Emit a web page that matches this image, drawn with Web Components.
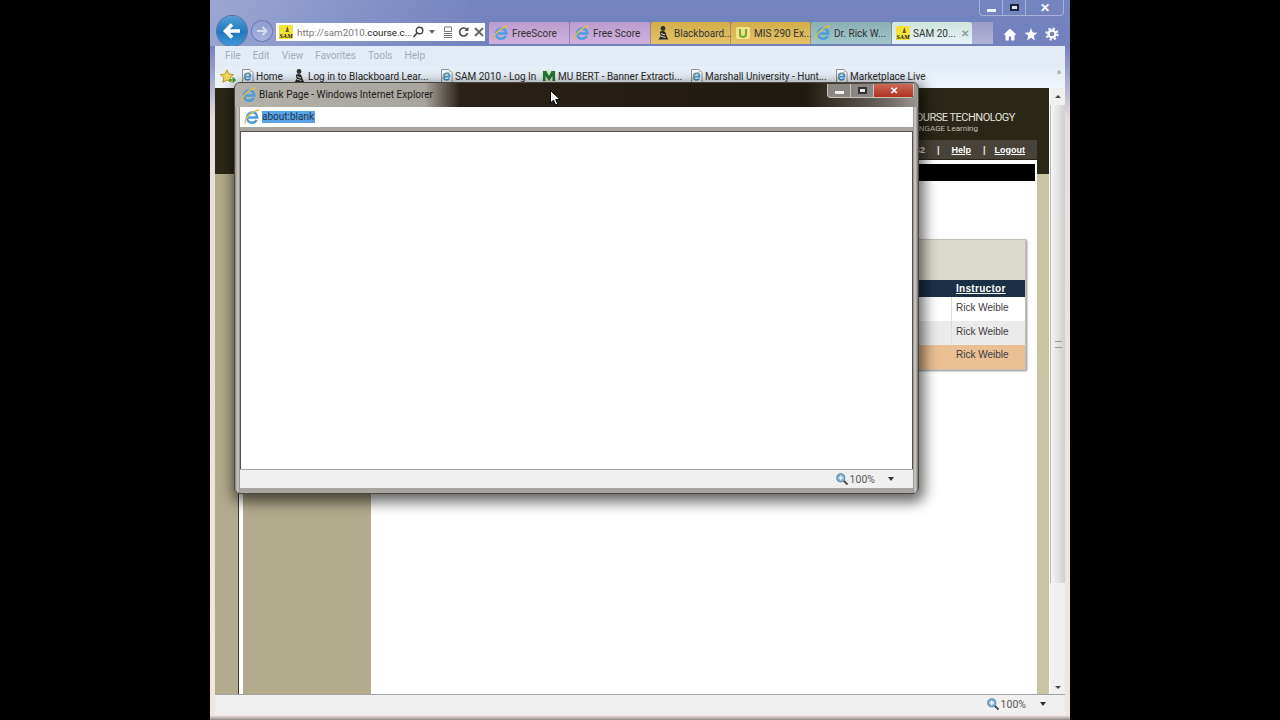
<!DOCTYPE html>
<html lang="en">

<head>
    <meta charset="UTF-8" />
    <title>SAM 2010 - Windows Internet Explorer</title>
    <style>
        html, body { margin: 0; height: 720px; overflow: hidden; background: #000; }
        body { display: flex; justify-content: center; font-family: Roboto, "Noto Sans", sans-serif; }
    </style>
</head>

<body>
    <ie-window>
        <ie-toolbar slot="toolbar">
            <ie-tab slot="tabs" tone="purple" icon="ie">FreeScore</ie-tab>
            <ie-tab slot="tabs" tone="purple" icon="ie">Free Score</ie-tab>
            <ie-tab slot="tabs" tone="gold" icon="bb">Blackboard...</ie-tab>
            <ie-tab slot="tabs" tone="gold" icon="u">MIS 290 Ex...</ie-tab>
            <ie-tab slot="tabs" tone="teal" icon="ie">Dr. Rick W...</ie-tab>
            <ie-tab slot="tabs" tone="active" icon="sam" closable>SAM 20...</ie-tab>
        </ie-toolbar>
        <ie-favorites slot="favs">
            <ie-fav icon="page" style="width:50px">Home</ie-fav>
            <ie-fav icon="bb" style="width:149px">Log in to Blackboard Lear...</ie-fav>
            <ie-fav icon="page" style="width:101px">SAM 2010 - Log In</ie-fav>
            <ie-fav icon="mu" style="width:149px">MU BERT - Banner Extracti...</ie-fav>
            <ie-fav icon="page" style="width:145px">Marshall University - Hunt...</ie-fav>
            <ie-fav icon="page" style="width:110px">Marketplace Live</ie-fav>
        </ie-favorites>
        <sam-page slot="page">
            <course-row slot="rows">Rick Weible</course-row>
            <course-row slot="rows" tone="grey">Rick Weible</course-row>
            <course-row slot="rows" tone="orange">Rick Weible</course-row>
        </sam-page>
        <ie-popup slot="popup"></ie-popup>
        <mouse-cursor slot="popup"></mouse-cursor>
    </ie-window>

    <script>
        // svg for every little icon, shared by the elements below
        const ICONS = {
            ie: `<svg viewBox="0 0 16 16" width="16" height="16"><path d="M3.6 8.6h9.6c0-3.200-2-5.200-4.800-5.200S3 5.600 3 8.700s2.200 5 5.100 5c2 0 3.700-1 4.500-2.700" fill="none" stroke="#4a9fdc" stroke-width="2.500"/><path d="M1.400 14.600C-.2 10.800 6 2.600 15 1" fill="none" stroke="#e4bc4a" stroke-width="1.300"/></svg>`,
            page: `<svg viewBox="2 0 13 16" width="14" height="16"><path d="M3 1.500h7.500l3 3v10H3z" fill="#f7f9fc" stroke="#8a94a0"/><path d="M5.400 8.600h5.700c0-2-1.200-3.200-2.900-3.200S5.100 6.700 5.100 8.700s1.300 3.200 3.100 3.200c1.200 0 2.200-.6 2.700-1.600" fill="none" stroke="#3d97d6" stroke-width="1.600"/><path d="M3.600 12.800C3 10 7 5 11.800 3.600" fill="none" stroke="#dcae3a" stroke-width=".9"/></svg>`,
            bb: `<svg viewBox="0 0 16 16" width="16" height="16"><circle cx="8" cy="3.500" r="2.400" fill="#33332f"/><path d="M4.800 6.800c2-1.300 4.200-1 5.400.2L12 12l1.500 2.500H3.500L5.600 11z" fill="#2a2a28"/><path d="M6 8.500l4 1.500M5.500 11l5 1.600" stroke="#d8d8d0" stroke-width="1"/></svg>`,
            sam: `<svg viewBox="0 0 14 14" width="14" height="14"><rect width="14" height="14" fill="#f5e23a"/><path d="M8.500 1L6.500 7h3.500z" fill="#6a5a1a"/><text x="7" y="12.500" text-anchor="middle" font-family="Liberation Serif, serif" font-size="6.500" font-weight="700" font-style="italic" fill="#222">SAM</text></svg>`,
            u: `<svg viewBox="0 0 16 16" width="16" height="16"><rect x="1" y="2" width="14" height="12" rx="2" fill="#f2e58a"/><path d="M5 4v5c0 2 1.300 3 3 3s3-1 3-3V4" fill="none" stroke="#7fa83c" stroke-width="2.200"/></svg>`,
            mu: `<svg viewBox="0 0 16 16" width="16" height="16"><rect x="1" y="2" width="14" height="12" fill="#dfe8d8"/><path d="M2 3h3.500L8 8l2.500-5H14v10h-2.500V8L8 13 4.500 8v5H2z" fill="#1f7a32"/></svg>`,
            zoom: `<svg viewBox="0 0 13 13" width="12" height="12"><circle cx="5.200" cy="5.200" r="4.400" fill="#7fb0d6" stroke="#5a7f9c"/><path d="M2.800 5.200h5M5.200 2.800v5" stroke="#fff" stroke-width="1.300"/><path d="M8.500 8.500l4 4" stroke="#3a4048" stroke-width="2"/></svg>`
        };

        class IeIcon extends HTMLElement {
            connectedCallback() {
                const root = this.attachShadow({ mode: 'open' });
                root.innerHTML = `<style>:host{display:inline-flex;flex:none;align-items:center}</style>${ICONS[this.getAttribute('name')] || ''}`;
            }
        }
        customElements.define('ie-icon', IeIcon);

        // outer browser frame
        class IeWindow extends HTMLElement {
            constructor() {
                super();
                this.attachShadow({ mode: 'open' }).innerHTML = `
                <style>
                    :host { display: flex; flex-direction: column; position: relative; width: 860px; height: 720px; flex: none;
                        background: linear-gradient(#7385bf 0, #7381bd 46px, #e9dcdc 120px, #f3e6e2 100%); overflow: hidden; }
                    .glow { position: absolute; left: 0; top: 0; width: 260px; height: 46px; background: linear-gradient(100deg, rgba(200,210,235,.45), rgba(200,210,235,0)); }
                    .client { position: relative; display: flex; flex-direction: column; margin: 0 5px; height: 670px; }
                    .menu { display: flex; gap: 12px; height: 20px; align-items: center; padding: 0 0 2px 10px; box-sizing: border-box; background: #e2ebf6;
                        color: #a3abb5; font-size: 10px; }
                    .page { height: 606px; display: flex; }
                    .status { height: 21px; display: flex; align-items: center; justify-content: flex-end; gap: 2px; padding: 0 19px 2px 0; box-sizing: border-box;
                        background: #f0f0f0; border-top: 1px solid #a3a3a3; font-size: 10.500px; color: #5a5a5a; }
                    .status i { width: 0; height: 0; margin-left: 12px; border: 3.500px solid transparent; border-top: 4px solid #333; border-bottom: 0; }
                    .edge { height: 4px; background: linear-gradient(#e8dcd8, #8d8886); }
                    ::slotted(ie-popup) { position: absolute; left: 24px; top: 82px; }
                    ::slotted(mouse-cursor) { position: absolute; left: 340px; top: 90px; }
                </style>
                <div class="glow"></div>
                <slot name="toolbar"></slot>
                <div class="client">
                    <div class="menu"><span>File</span><span>Edit</span><span>View</span><span>Favorites</span><span>Tools</span><span>Help</span></div>
                    <slot name="favs"></slot>
                    <div class="page"><slot name="page"></slot></div>
                    <div class="status"><ie-icon name="zoom"></ie-icon><span>100%</span><i></i></div>
                </div>
                <div class="edge"></div>
                <slot name="popup"></slot>`;
            }
        }
        customElements.define('ie-window', IeWindow);

        // caption buttons + back/forward, address box, tabs, tools
        class IeToolbar extends HTMLElement {
            constructor() {
                super();
                this.attachShadow({ mode: 'open' }).innerHTML = `
                <style>
                    :host { display: flex; flex-direction: column; position: relative; height: 46px; }
                    .caption { display: flex; justify-content: flex-end; height: 16px; padding-right: 6px; }
                    .btns { display: flex; width: 85px; border: 1px solid #a8b2d8; border-top: 0; border-radius: 0 0 4px 4px; box-sizing: border-box; }
                    .btns span { display: flex; align-items: center; justify-content: center; width: 22px; border-right: 1px solid #a8b2d8; }
                    .btns span:last-child { flex: 1; border: 0; color: #fff; font: bold 12px "Liberation Sans", sans-serif; }
                    .min { width: 9px; height: 3px; background: #f2f4fa; margin-top: 5px; }
                    .max { width: 9px; height: 7px; border: 2px solid #1e2340; background: #dfe4f2; box-sizing: border-box; }
                    .nav { display: flex; flex: 1; align-items: flex-end; padding-left: 7px; }
                    .back { width: 30px; height: 30px; border-radius: 50%; flex: none; display: flex; align-items: center; justify-content: center;
                        background: linear-gradient(#4f9ed8, #1f78bd 55%, #3f9ad8); box-shadow: 0 0 0 1px #5a6aa8; }
                    .fwd { width: 20px; height: 20px; border-radius: 50%; margin: 0 4px 5px 5px; flex: none; display: flex; align-items: center; justify-content: center;
                        background: linear-gradient(#8f9bd0, #a8b2dc); box-shadow: 0 0 0 1px #6d79b4; }
                    .addr { width: 209px; height: 18px; margin: 0 4px 5px 0; flex: none; display: flex; align-items: center; background: #fff; box-sizing: border-box; padding-left: 3px;
                        font-size: 9.800px; color: #222; white-space: nowrap; }
                    .addr b { font-weight: 400; color: #7a7a7a; margin-left: 4px; }
                    .addr .tools { display: flex; align-items: center; margin-left: auto; padding-right: 5px; gap: 5px; }
                    .tabs { display: flex; height: 22px; flex: none; margin-bottom: 2px; }
                    .newtab { width: 21px; background: linear-gradient(#9d9dc8, #b0b4d6); }
                    .right { display: flex; gap: 7px; margin: 0 0 5px 10px; align-items: center; }
                </style>
                <div class="caption"><div class="btns"><span><i class="min"></i></span><span><i class="max"></i></span><span>✕</span></div></div>
                <div class="nav">
                    <div class="back"><svg width="20" height="18" viewBox="0 0 20 18"><path d="M18 9H4M10 2.500L3.500 9l6.500 6.500" fill="none" stroke="#fff" stroke-width="3.600"/></svg></div>
                    <div class="fwd"><svg width="12" height="12" viewBox="0 0 12 12"><path d="M1 6h9M6.500 2L10.500 6l-4 4" fill="none" stroke="#d7dcf0" stroke-width="1.800"/></svg></div>
                    <div class="addr">
                        <ie-icon name="sam"></ie-icon><span><b>http://sam2010</b>.course.c...</span>
                        <div class="tools">
                            <svg width="12" height="12" viewBox="0 0 12 12"><circle cx="7.500" cy="4.500" r="3.300" fill="none" stroke="#444" stroke-width="1.400"/><path d="M5 7l-3.500 4" stroke="#444" stroke-width="1.800"/></svg>
                            <svg width="6" height="4" viewBox="0 0 6 4"><path d="M0 0h6L3 4z" fill="#666"/></svg>
                            <svg width="10" height="12" viewBox="0 0 10 12" style="margin-left:3px"><path d="M1.500 1h7v4.500h-7zM1 7.500h8M1 9.500h8M1 11.500h8" fill="none" stroke="#777"/></svg>
                            <svg width="11" height="12" viewBox="0 0 11 12"><path d="M9.500 7a4 4 0 1 1-1-3.800" fill="none" stroke="#555" stroke-width="1.700"/><path d="M10.500 .8v4.200H6.300z" fill="#555"/></svg>
                            <svg width="10" height="10" viewBox="0 0 10 10"><path d="M1 1l8 8M9 1L1 9" stroke="#666" stroke-width="1.800"/></svg>
                        </div>
                    </div>
                    <div class="tabs"><slot name="tabs"></slot><div class="newtab"></div></div>
                    <div class="right">
                        <svg width="14" height="13" viewBox="0 0 14 13"><path d="M7 .5L.5 6.800h2V12.500h3.300V8.500h2.400v4h3.300V6.800h2z" fill="#fff"/></svg>
                        <svg width="14" height="13" viewBox="0 0 14 13"><path d="M7 0l1.700 4.500 4.800.2-3.800 3 1.300 4.800L7 9.800 3 12.500l1.300-4.800-3.800-3 4.800-.2z" fill="#fff"/></svg>
                        <svg width="14" height="14" viewBox="0 0 14 14"><circle cx="7" cy="7" r="3.500" fill="none" stroke="#fff" stroke-width="2.400"/><circle cx="7" cy="7" r="5.600" fill="none" stroke="#fff" stroke-width="2" stroke-dasharray="2.200 2.200"/></svg>
                    </div>
                </div>`;
            }
        }
        customElements.define('ie-toolbar', IeToolbar);

        class IeTab extends HTMLElement {
            constructor() {
                super();
                this.attachShadow({ mode: 'open' }).innerHTML = `
                <style>
                    :host { display: flex; align-items: center; gap: 3px; width: 81px; box-sizing: border-box; padding: 0 0 0 4px; font-size: 10px; color: #333;
                        white-space: nowrap; border-right: 1px solid rgba(90,80,110,.4); border-radius: 2px 2px 0 0;
                        background: linear-gradient(#bb9ecf, #cdb0dc); }
                    :host([tone=gold]) { background: linear-gradient(#d4ae4a, #e4c268); width: 80px; }
                    :host([tone=teal]) { background: linear-gradient(#8ab0b4, #a2c6ca); }
                    :host([tone=active]) { background: linear-gradient(#cfe4dc, #e8f2f8); width: 80px; border: 0; }
                    .x { color: #8aa0a0; font-size: 10px; font-weight: 700; margin-left: auto; padding-right: 3px; }
                </style>
                <ie-icon name="${this.getAttribute('icon')}"></ie-icon><slot></slot>${this.hasAttribute('closable') ? '<span class="x">✕</span>' : ''}`;
            }
        }
        customElements.define('ie-tab', IeTab);

        class IeFavorites extends HTMLElement {
            constructor() {
                super();
                this.attachShadow({ mode: 'open' }).innerHTML = `
                <style>
                    :host { display: flex; align-items: center; height: 22px; background: linear-gradient(#e4edf7, #f1f6fc); padding: 0 0 2px 5px; box-sizing: border-box; }
                    .star { width: 21px; flex: none; display: flex; }
                    .more { margin-left: auto; padding-right: 4px; margin-top: -8px; font-size: 9px; color: #777; }
                </style>
                <div class="star"><svg width="16" height="15" viewBox="0 0 16 15"><path d="M7 .8l2 4.300 4.600.5-3.400 3.100 1 4.600L7 11 2.800 13.300l1-4.600L.4 5.600 5 5.100z" fill="#f1d65a" stroke="#b89a2c"/><path d="M9 11h6M12.500 8.500L15 11l-2.500 2.500" fill="none" stroke="#4fa53a" stroke-width="1.600"/></svg></div>
                <slot></slot><span class="more">»</span>`;
            }
        }
        customElements.define('ie-favorites', IeFavorites);

        class IeFav extends HTMLElement {
            constructor() {
                super();
                this.attachShadow({ mode: 'open' }).innerHTML = `
                <style>:host { display: flex; align-items: center; flex: none; gap: 1px; font-size: 10px; color: #2a2a2a; white-space: nowrap; }</style>
                <ie-icon name="${this.getAttribute('icon')}"></ie-icon><slot></slot>`;
            }
        }
        customElements.define('ie-fav', IeFav);

        // the SAM site behind the popup
        class SamPage extends HTMLElement {
            constructor() {
                super();
                this.attachShadow({ mode: 'open' }).innerHTML = `
                <style>
                    :host { display: flex; width: 850px; height: 606px; font-family: "Liberation Sans", Arial, sans-serif; }
                    .site { width: 834px; background: linear-gradient(90deg, #b3ab8d 0, #b3ab8d 24px, #c9c4a4 24px); display: flex; flex-direction: column; }
                    .head { height: 86px; flex: none; background: #2a2618; display: flex; flex-direction: column; box-sizing: border-box; padding-top: 23px; }
                    .brand { align-self: flex-end; margin-right: 31px; color: #e4e2dc; font: 11px/14px Roboto, sans-serif; white-space: nowrap; letter-spacing: -.5px; }
                    .brand small { display: flex; justify-content: flex-end; padding-right: 40px; font-size: 8px; line-height: 8px; letter-spacing: 0; color: #c4c1b8; }
                    .user { margin: 7px 12px 0 300px; height: 19px; background: #48433a; display: flex; justify-content: flex-end; align-items: center; gap: 12px; padding-right: 12px;
                        color: #e8e6e0; font-size: 9px; font-weight: 700; }
                    .user u { color: #fff; }
                    .user u:last-child { margin-left: -3px; }
                    .card { flex: 1; margin: -14px 12px 0 23px; background: #fff; border-left: 1px solid #3a3a30; padding: 4px 2px 0 4px; display: flex; flex-direction: column; }
                    .bar { height: 17px; background: #000; flex: none; }
                    .cols { flex: 1; display: flex; margin-top: 4px; }
                    .side { width: 128px; background: #b3ab8d; flex: none; }
                    .main { flex: 1; padding: 54px 9px 0 9px; }
                    .panel { background: #fff; border: 1px solid #c4c2b8; box-shadow: 1px 1px 2px #8a8a84; }
                    .ptop { height: 40px; background: #dcd9cd; }
                    .thead { height: 17px; background: #1b2f47; display: flex; justify-content: flex-end; align-items: center; }
                    .thead u { width: 74px; padding-left: 5px; box-sizing: border-box; color: #fff; font-size: 10px; font-weight: 700; letter-spacing: .3px; }
                    .rside { width: 16px; flex: none; box-sizing: border-box; background: #f0f0f0; border-left: 1px solid #fff; display: flex; flex-direction: column; align-items: center; }
                    .arrow { width: 0; height: 0; border: 3px solid transparent; flex: none; }
                    .up { border-bottom: 3px solid #444; border-top: 0; margin: 7px 0 7px; }
                    .down { border-top: 3px solid #444; border-bottom: 0; margin-top: auto; margin-bottom: 5px; }
                    .thumb { width: 100%; height: 478px; background: linear-gradient(90deg, #f6f6f6, #cfcfcf); border-left: 1px solid #bbb; box-sizing: border-box; display: flex; align-items: center; justify-content: center; }
                    .thumb i { width: 7px; height: 5px; border-top: 1px solid #999; border-bottom: 1px solid #999; }
                </style>
                <div class="site">
                    <div class="head">
                        <div class="brand">COURSE TECHNOLOGY<small>CENGAGE Learning</small></div>
                        <div class="user"><span>42</span><span>|</span><u>Help</u><span>|</span><u>Logout</u></div>
                    </div>
                    <div class="card">
                        <div class="bar"></div>
                        <div class="cols">
                            <div class="side"></div>
                            <div class="main">
                                <div class="panel">
                                    <div class="ptop"></div>
                                    <div class="thead"><u>Instructor</u></div>
                                    <slot name="rows"></slot>
                                </div>
                            </div>
                        </div>
                    </div>
                </div>
                <div class="rside"><i class="arrow up"></i><div class="thumb"><i></i></div><i class="arrow down"></i></div>`;
            }
        }
        customElements.define('sam-page', SamPage);

        class CourseRow extends HTMLElement {
            constructor() {
                super();
                this.attachShadow({ mode: 'open' }).innerHTML = `
                <style>
                    :host { display: flex; justify-content: flex-end; height: 24px; background: #fff; font-size: 10px; color: #3c3c3c; }
                    :host([tone=grey]) { background: #ebebeb; }
                    :host([tone=orange]) { background: #eabf94; }
                    div { width: 74px; box-sizing: border-box; padding: 5px 0 0 4px; border-left: 1px solid #ddd; }
                    :host([tone=orange]) div { border: 0; padding: 4px 0 0 5px; }
                </style>
                <div><slot></slot></div>`;
            }
        }
        customElements.define('course-row', CourseRow);

        // the blank IE popup window on top
        class IePopup extends HTMLElement {
            constructor() {
                super();
                this.attachShadow({ mode: 'open' }).innerHTML = `
                <style>
                    :host { display: flex; flex-direction: column; width: 685px; height: 412px; box-sizing: border-box; padding: 0 5px 5px; border-radius: 6px;
                        background: linear-gradient(90deg, #8c8884, #cfccc8 3px, #8a8784 5px, #a8a4a0 5px, #a8a4a0 calc(100% - 5px), #8a8784 calc(100% - 5px), #d5d2d0 calc(100% - 3px), #77736e 100%);
                        border: 1px solid #4a4640; box-shadow: 2px 5px 14px 3px rgba(0,0,0,.6); font-size: 10px; color: #222; }
                    .title { position: relative; height: 24px; flex: none; margin: 0 -5px; padding: 0 0 1px 6px; box-sizing: border-box; display: flex; align-items: center; gap: 2px; border-radius: 6px 6px 0 0;
                        background: linear-gradient(90deg, #b4b0aa 0, #a8a49e 190px, #2a2218 225px, #211a10 570px, #6a6560 650px, #9a9692 100%); color: #1c1c1c; }
                    .caption { position: absolute; right: 4px; top: 1px; display: flex; height: 14px; width: 87px; border: 1px solid #c8c4c0; border-top: 0; border-radius: 0 0 4px 4px; box-sizing: border-box; background: #8a8682; }
                    .caption span { display: flex; align-items: center; justify-content: center; width: 22px; border-right: 1px solid #c8c4c0; }
                    .caption span:last-child { flex: 1; border: 0; color: #fff; background: linear-gradient(#cc6a58, #b03020); font: bold 10px "Liberation Sans", sans-serif; }
                    .min { width: 9px; height: 3px; background: #eee; margin-top: 4px; }
                    .max { width: 9px; height: 7px; border: 2px solid #333; background: #e8e8e8; box-sizing: border-box; }
                    .addr { height: 20px; flex: none; background: #fff; display: flex; align-items: center; gap: 2px; padding-left: 4px; }
                    .addr span { background: #5aa5e8; color: #22344e; line-height: 12px; padding-right: 1px; }
                    .view { flex: 1; margin-top: 4px; background: #fff; border: 1px solid #55524e; border-bottom: 0; }
                    .status { height: 18px; flex: none; background: #f0f0f0; border-top: 1px solid #a3a3a3; display: flex; justify-content: flex-end; align-items: center; gap: 2px; padding-right: 19px; color: #5a5a5a; font-size: 10.500px; }
                    .status i { width: 0; height: 0; margin-left: 11px; border: 3.500px solid transparent; border-top: 4px solid #333; border-bottom: 0; }
                </style>
                <div class="title"><ie-icon name="ie"></ie-icon><span>Blank Page - Windows Internet Explorer</span>
                    <div class="caption"><span><i class="min"></i></span><span><i class="max"></i></span><span>✕</span></div></div>
                <div class="addr"><ie-icon name="ie"></ie-icon><span>about:blank</span></div>
                <div class="view"></div>
                <div class="status"><ie-icon name="zoom"></ie-icon><span>100%</span><i></i></div>`;
            }
        }
        customElements.define('ie-popup', IePopup);

        class MouseCursor extends HTMLElement {
            constructor() {
                super();
                this.attachShadow({ mode: 'open' }).innerHTML = `
                <style>:host { display: block; width: 12px; height: 16px; }</style>
                <svg width="12" height="16" viewBox="0 0 12 16"><path d="M.5.500v12.500l3-2.800 2 4.800 2.200-1-2-4.500h4.300z" fill="#fff" stroke="#000"/></svg>`;
            }
        }
        customElements.define('mouse-cursor', MouseCursor);
    </script>
</body>

</html>
